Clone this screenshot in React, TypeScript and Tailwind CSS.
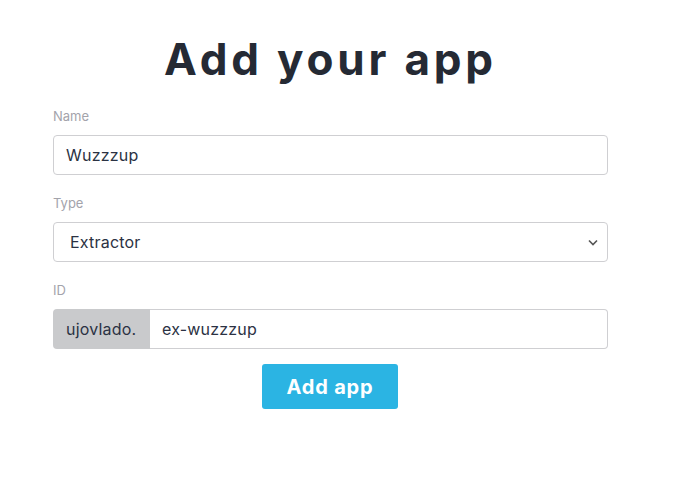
import React from "react";

export default function App() {
  return (
    <div className="w-[681px] h-[485px] bg-white" style={{ fontFamily: "Inter, 'Noto Sans', sans-serif" }}>
      <div className="w-[555px] ml-[53px] pt-[31px] flex flex-col">
        <h1 className="text-center text-[44px] leading-[56px] font-bold text-[#252a34] tracking-[3.8px]">Add your app</h1>
        <label className="mt-[21px] text-[13px] leading-[16px] text-[#a3a3ab]">Name</label>
        <div className="mt-[11px] h-[40px] border border-[#cfcfd2] rounded-[4px] flex items-center px-[12px] text-[16px] text-[#2b3243] tracking-[0.2px]">Wuzzzup</div>
        <label className="mt-[20px] text-[13px] leading-[16px] text-[#a3a3ab]">Type</label>
        <div className="mt-[11px] h-[40px] border border-[#cfcfd2] rounded-[4px] flex items-center pl-[16px] pr-[8px] text-[16px] text-[#2b3243] tracking-[0.2px]">
          <span className="flex-1">Extractor</span>
          <svg width="10" height="7" viewBox="0 0 10 7" className="mr-[1px]">
            <path d="M1 1.5 L5 5.5 L9 1.5" fill="none" stroke="#555" strokeWidth="1.6" />
          </svg>
        </div>
        <label className="mt-[20px] text-[13px] leading-[16px] text-[#a3a3ab]">ID</label>
        <div className="mt-[11px] h-[40px] flex text-[16px] text-[#2b3243] tracking-[0.2px]">
          <div className="w-[97px] bg-[#c9cacc] rounded-l-[4px] flex items-center pl-[13px]">ujovlado.</div>
          <div className="flex-1 border border-[#cfcfd2] border-l-0 rounded-r-[4px] flex items-center pl-[12px]">ex-wuzzzup</div>
        </div>
        <div className="mt-[15px] flex justify-center">
          <button className="w-[136px] h-[45px] -ml-[1px] bg-[#2bb4e3] rounded-[3px] text-white text-[20px] font-bold tracking-[0.8px]">Add app</button>
        </div>
      </div>
    </div>
  );
}
